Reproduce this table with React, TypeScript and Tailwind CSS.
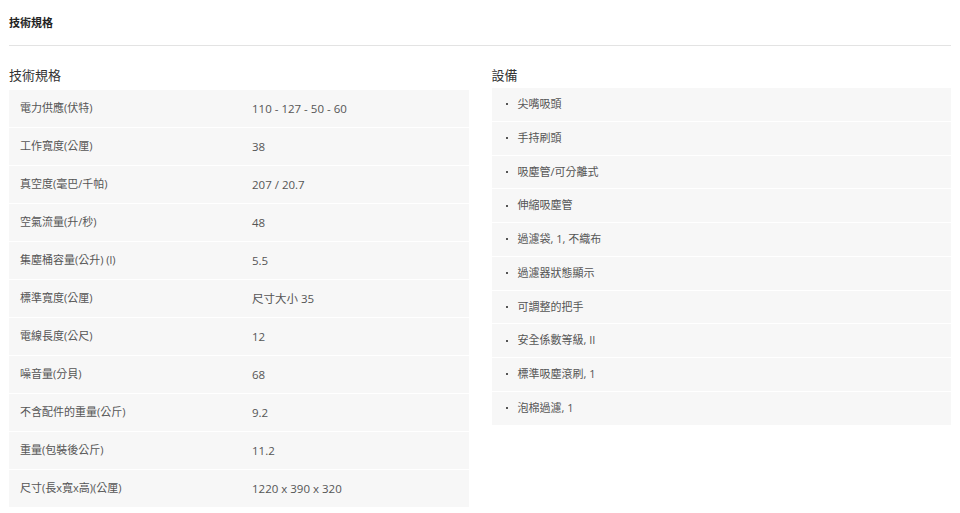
const specs = [
  ["電力供應(伏特)", "110 - 127 - 50 - 60"],
  ["工作寬度(公厘)", "38"],
  ["真空度(毫巴/千帕)", "207 / 20.7"],
  ["空氣流量(升/秒)", "48"],
  ["集塵桶容量(公升) (l)", "5.5"],
  ["標準寬度(公厘)", "尺寸大小 35"],
  ["電線長度(公尺)", "12"],
  ["噪音量(分貝)", "68"],
  ["不含配件的重量(公斤)", "9.2"],
  ["重量(包裝後公斤)", "11.2"],
  ["尺寸(長x寬x高)(公厘)", "1220 x 390 x 320"],
];

const equipment = [
  "尖嘴吸頭",
  "手持刷頭",
  "吸塵管/可分離式",
  "伸縮吸塵管",
  "過濾袋, 1, 不織布",
  "過濾器狀態顯示",
  "可調整的把手",
  "安全係數等級, II",
  "標準吸塵滾刷, 1",
  "泡棉過濾, 1",
];

export default function App() {
  return (
    <div
      className="w-[960px] h-[513px] bg-white px-[9px] overflow-hidden"
      style={{ fontFamily: '"Open Sans", "Noto Sans CJK TC", sans-serif' }}
    >
      <div className="h-[46px] flex items-center border-b border-[#e3e3e3]">
        <span className="text-[11px] font-bold text-[#222] mt-[1px]">技術規格</span>
      </div>

      <div className="grid grid-cols-2 gap-[23px] pt-[18px]">
        <section>
          <h2 className="text-[13px] text-[#333] leading-[22px] mb-[4px]">技術規格</h2>
          <div>
            {specs.map(([label, value]) => (
              <div
                key={label}
                className="grid grid-cols-[232px_1fr] items-center h-[38px] pl-[11px] bg-[#f7f7f7] border-b border-white text-[11px] text-[#555]"
              >
                <span>{label}</span>
                <span className="text-[11.5px]">{value}</span>
              </div>
            ))}
          </div>
        </section>

        <section>
          <h2 className="text-[13px] text-[#333] leading-[22px] mb-[2px]">設備</h2>
          <ul>
            {equipment.map((item) => (
              <li
                key={item}
                className="flex items-center h-[33.75px] pl-[14px] bg-[#f7f7f7] border-b border-white text-[11px] text-[#555]"
              >
                <span className="w-[2px] h-[2px] bg-[#555] mr-[10px]" />
                <span>{item}</span>
              </li>
            ))}
          </ul>
        </section>
      </div>
    </div>
  );
}
